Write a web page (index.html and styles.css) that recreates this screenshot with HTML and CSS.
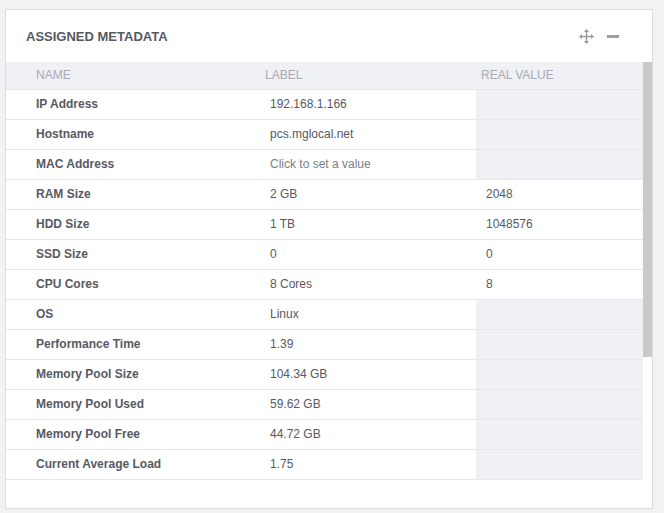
FILE: index.html
```html
<!DOCTYPE html>
<html lang="en">
<head>
<meta charset="utf-8">
<title>Assigned Metadata</title>
<link rel="stylesheet" href="styles.css">
</head>
<body>
<section class="card">
  <header class="card-head">
    <h2 class="card-title">ASSIGNED METADATA</h2>
    <div class="tools">
      <svg class="tool-move" width="15" height="15" viewBox="0 0 15 15" aria-hidden="true">
        <g fill="none" stroke="#9a97a0" stroke-width="1.4">
          <line x1="7.5" y1="1.5" x2="7.5" y2="13.5"/>
          <line x1="1.5" y1="7.5" x2="13.5" y2="7.5"/>
        </g>
        <g fill="#9a97a0">
          <path d="M7.5 0 L10 3 L5 3 Z"/>
          <path d="M7.5 15 L10 12 L5 12 Z"/>
          <path d="M0 7.5 L3 5 L3 10 Z"/>
          <path d="M15 7.5 L12 5 L12 10 Z"/>
        </g>
      </svg>
      <span class="tool-min" aria-label="minimize"></span>
    </div>
  </header>
  <div class="scroll-area">
    <div class="viewport">
      <table class="meta">
        <thead>
          <tr><th class="c-name">NAME</th><th class="c-label">LABEL</th><th class="c-real">REAL VALUE</th></tr>
        </thead>
        <tbody>
          <tr><td class="c-name">IP Address</td><td class="c-label">192.168.1.166</td><td class="c-real empty"></td></tr>
          <tr><td class="c-name">Hostname</td><td class="c-label">pcs.mglocal.net</td><td class="c-real empty"></td></tr>
          <tr><td class="c-name">MAC Address</td><td class="c-label unset">Click to set a value</td><td class="c-real empty"></td></tr>
          <tr><td class="c-name">RAM Size</td><td class="c-label">2 GB</td><td class="c-real">2048</td></tr>
          <tr><td class="c-name">HDD Size</td><td class="c-label">1 TB</td><td class="c-real">1048576</td></tr>
          <tr><td class="c-name">SSD Size</td><td class="c-label">0</td><td class="c-real">0</td></tr>
          <tr><td class="c-name">CPU Cores</td><td class="c-label">8 Cores</td><td class="c-real">8</td></tr>
          <tr><td class="c-name">OS</td><td class="c-label">Linux</td><td class="c-real empty"></td></tr>
          <tr><td class="c-name">Performance Time</td><td class="c-label">1.39</td><td class="c-real empty"></td></tr>
          <tr><td class="c-name">Memory Pool Size</td><td class="c-label">104.34 GB</td><td class="c-real empty"></td></tr>
          <tr><td class="c-name">Memory Pool Used</td><td class="c-label">59.62 GB</td><td class="c-real empty"></td></tr>
          <tr><td class="c-name">Memory Pool Free</td><td class="c-label">44.72 GB</td><td class="c-real empty"></td></tr>
          <tr><td class="c-name">Current Average Load</td><td class="c-label">1.75</td><td class="c-real empty"></td></tr>
        </tbody>
      </table>
    </div>
    <div class="scrollbar"><div class="thumb"></div></div>
  </div>
</section>
</body>
</html>
```
FILE: styles.css
```css
* { box-sizing: border-box; }

html, body {
  margin: 0;
  background: #f2f2f3;
}

body {
  padding: 9px 11px 4px 5px;
  font-family: "Liberation Sans", Arial, sans-serif;
  color: #575962;
}

.card {
  background: #fff;
  border: 1px solid #dcdcdf;
  height: 500px;
  display: flex;
  flex-direction: column;
  padding-bottom: 26px;
}

.card-head {
  height: 52px;
  flex: none;
  display: flex;
  align-items: center;
  justify-content: space-between;
  padding: 0 33px 0 20px;
}

.card-title {
  margin: 0;
  font-size: 13px;
  font-weight: 700;
  color: #575962;
}

.tools {
  display: flex;
  align-items: center;
  gap: 13px;
}

.tool-move { display: block; }

.tool-min {
  display: block;
  width: 12px;
  height: 3px;
  background: #a09ca3;
}

.scroll-area {
  flex: 1;
  min-height: 0;
  display: flex;
}

.viewport {
  flex: 1;
  min-width: 0;
  overflow: hidden;
}

.scrollbar {
  width: 9px;
  flex: none;
  background: #fff;
}

.thumb {
  height: 295px;
  background: #c9c9c9;
}

.meta {
  width: 100%;
  border-collapse: collapse;
  table-layout: fixed;
  font-size: 12px;
}

.meta th {
  height: 27px;
  background: #f0f1f5;
  color: #a7aab5;
  font-weight: 400;
  text-align: left;
  border-bottom: 1px solid #e4e5ea;
  padding: 0 0 1px 5px;
}

.meta td {
  height: 30px;
  border-bottom: 1px solid #e6e7eb;
  padding: 0 0 0 10px;
  white-space: nowrap;
}

.meta .c-name { width: 254px; padding-left: 30px; }
.meta .c-label { width: 216px; }

.meta td.c-name { font-weight: 700; }

.meta td.unset { color: #7b7e89; }

.meta td.empty { background: #f0f1f5; }
```
